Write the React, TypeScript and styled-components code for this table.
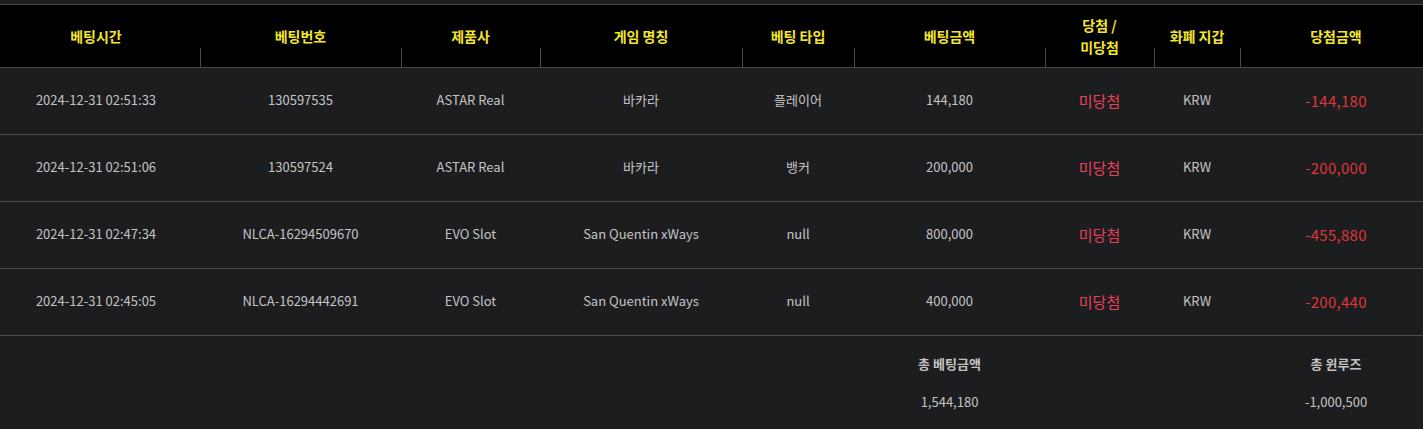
import React from "react";
import styled, { createGlobalStyle } from "styled-components";

const GlobalStyle = createGlobalStyle`
  html, body {
    margin: 0;
    padding: 0;
    background: #1c1d1f;
    overflow: hidden;
  }
  body {
    font-family: "Noto Sans CJK KR", "Noto Sans", sans-serif;
  }
`;

const COLS = "200px 201px 139px 202px 112px 191px 109px 86px 192px";

const Wrapper = styled.div`
  width: 1432px;
  padding-top: 4px;
  background: #1c1d1f;
`;

const HeadRow = styled.div`
  display: grid;
  grid-template-columns: ${COLS};
  height: 62px;
  background: #000;
  border-top: 1px solid #4b4b4b;
  border-bottom: 1px solid #4b4b4b;
`;

const HeadCell = styled.div<{ $first?: boolean; $divider?: boolean }>`
  position: relative;
  display: flex;
  align-items: center;
  justify-content: center;
  text-align: center;
  padding-right: ${(p) => (p.$first ? "8px" : "0")};
  color: #f3e52d;
  font-size: 14px;
  font-weight: 700;
  line-height: 22px;
  padding-bottom: 1px;

  &::before {
    content: "";
    display: ${(p) => (p.$divider ? "block" : "none")};
    position: absolute;
    left: 0;
    bottom: 0;
    height: 19px;
    border-left: 1px solid #4b4b4b;
  }
`;

const BodyRow = styled.div`
  display: grid;
  grid-template-columns: ${COLS};
  height: 66px;
  border-bottom: 1px solid #4b4b4b;
`;

const Cell = styled.div<{ $first?: boolean; $tone?: "status" | "loss" }>`
  display: flex;
  align-items: center;
  justify-content: center;
  padding-right: ${(p) => (p.$first ? "8px" : "0")};
  padding-bottom: ${(p) => (p.$tone ? "1px" : "3px")};
  color: ${(p) =>
    p.$tone === "status" ? "#e8405a" : p.$tone === "loss" ? "#e0353b" : "#c4c4c4"};
  font-size: ${(p) => (p.$tone ? "15px" : "13px")};
  letter-spacing: ${(p) => (p.$tone === "loss" ? "0.3px" : "0")};
  white-space: nowrap;
`;

const Footer = styled.div`
  display: grid;
  grid-template-columns: ${COLS};
  grid-template-rows: 38px 38px;
  padding-top: 8px;
`;

const FootCell = styled.div<{ $col: number; $bold?: boolean }>`
  grid-column: ${(p) => p.$col};
  display: flex;
  align-items: center;
  justify-content: center;
  color: #c4c4c4;
  font-size: 13px;
  font-weight: ${(p) => (p.$bold ? 700 : 400)};
`;

const headers = [
  "베팅시간",
  "베팅번호",
  "제품사",
  "게임 명칭",
  "베팅 타입",
  "베팅금액",
  "당첨 /\n미당첨",
  "화폐 지갑",
  "당첨금액",
];

const rows = [
  ["2024-12-31 02:51:33", "130597535", "ASTAR Real", "바카라", "플레이어", "144,180", "미당첨", "KRW", "-144,180"],
  ["2024-12-31 02:51:06", "130597524", "ASTAR Real", "바카라", "뱅커", "200,000", "미당첨", "KRW", "-200,000"],
  ["2024-12-31 02:47:34", "NLCA-16294509670", "EVO Slot", "San Quentin xWays", "null", "800,000", "미당첨", "KRW", "-455,880"],
  ["2024-12-31 02:45:05", "NLCA-16294442691", "EVO Slot", "San Quentin xWays", "null", "400,000", "미당첨", "KRW", "-200,440"],
];

export default function App() {
  return (
    <Wrapper>
      <GlobalStyle />
      <HeadRow>
        {headers.map((h, i) => (
          <HeadCell key={i} $first={i === 0} $divider={i > 0}>
            <span>
              {h.split("\n").map((line, j) => (
                <React.Fragment key={j}>
                  {j > 0 && <br />}
                  {line}
                </React.Fragment>
              ))}
            </span>
          </HeadCell>
        ))}
      </HeadRow>
      {rows.map((r, i) => (
        <BodyRow key={i}>
          {r.map((v, j) => (
            <Cell
              key={j}
              $first={j === 0}
              $tone={j === 6 ? "status" : j === 8 ? "loss" : undefined}
            >
              {v}
            </Cell>
          ))}
        </BodyRow>
      ))}
      <Footer>
        <FootCell $col={6} $bold>총 베팅금액</FootCell>
        <FootCell $col={9} $bold>총 윈루즈</FootCell>
        <FootCell $col={6}>1,544,180</FootCell>
        <FootCell $col={9}>-1,000,500</FootCell>
      </Footer>
    </Wrapper>
  );
}
